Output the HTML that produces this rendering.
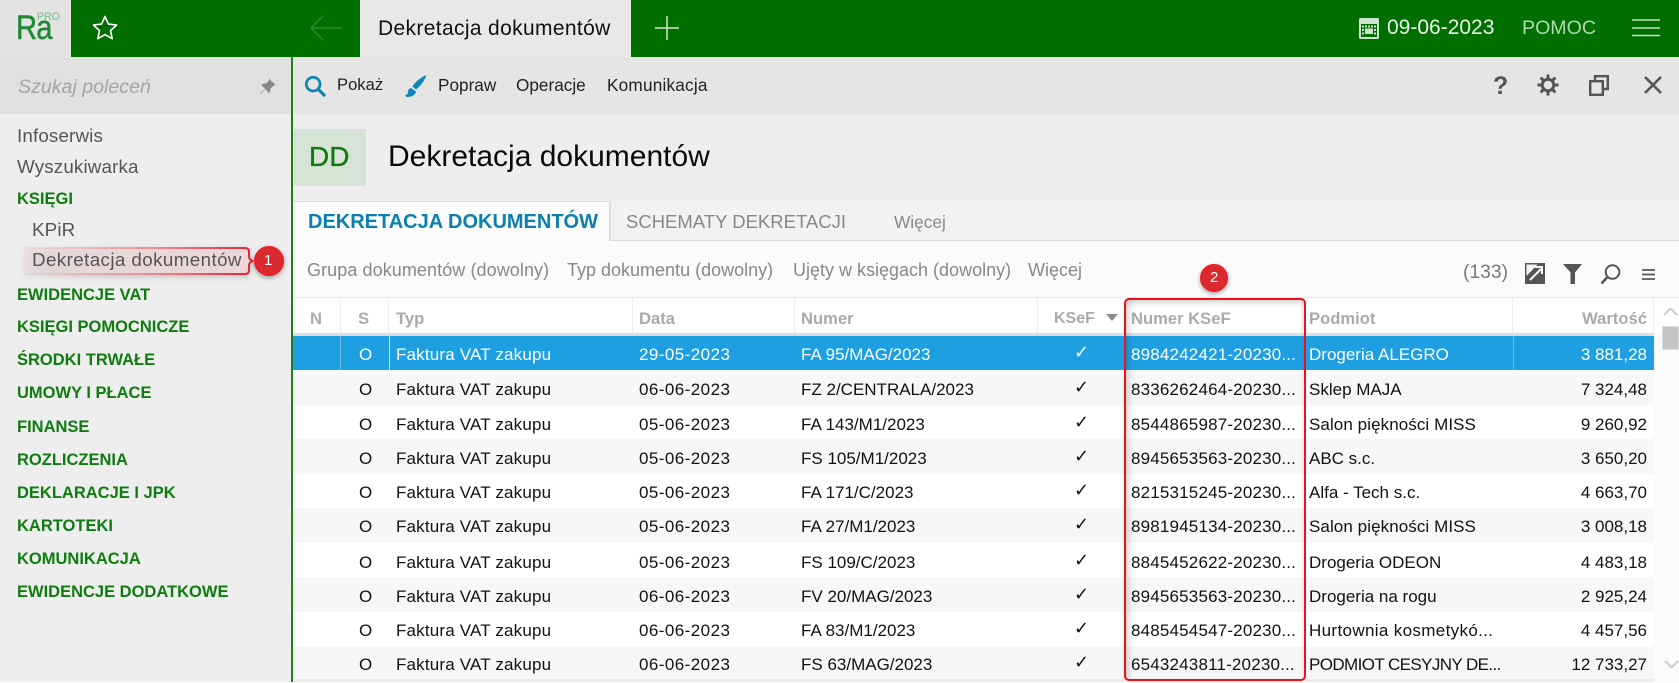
<!DOCTYPE html>
<html><head><meta charset="utf-8"><style>
html,body{margin:0;padding:0}
body{width:1679px;height:682px;position:relative;overflow:hidden;background:#fbfbfb;font-family:"Liberation Sans",sans-serif;color:#111}
.a{position:absolute;white-space:nowrap}
.b{position:absolute}
.s{font-size:18.8px;line-height:24px;color:#555;letter-spacing:.15px}
.g{font-size:16.5px;line-height:24px;color:#0f7c0f;font-weight:bold;left:17px}
.t{font-size:17.2px;line-height:24px;color:#222}
.f{font-size:18px;line-height:24px;color:#888;top:258px}
.h{font-size:16.6px;line-height:24px;color:#aaa;font-weight:bold;top:307px}
.r{position:absolute;left:293px;width:1361px;font-size:17px;color:#111;background:#fff}
.r.e{background:#f7f7f7}
.r.x{background:#1e9fe2;color:#fff}
.r span{position:absolute;white-space:nowrap;top:0}
.c1{left:66px}
.c2{left:103px;letter-spacing:.17px}.c3{left:346px;letter-spacing:.44px}.c4{left:508px}
.c5{left:781px;font-family:"DejaVu Sans",sans-serif;font-size:18px;margin-top:-2px}
.c6{left:838px;letter-spacing:.18px}.c7{left:1016px}.c8{right:7px}
.dot{position:absolute;top:298px;height:35px;width:0;border-left:1px dotted #ddd}
</style></head><body>

<!-- top bar -->
<div class="b" style="left:0;top:0;width:1679px;height:57px;background:#006f00"></div>
<div class="b" style="left:0;top:0;width:71px;height:57px;background:#e3e3e3"></div>
<div class="a" style="left:16px;top:7px;font-size:34px;line-height:42px;color:#1f8a35;letter-spacing:-1px;-webkit-text-stroke:.5px #1f8a35;transform:scaleX(.86);transform-origin:left center">Ra</div>
<div class="a" style="left:37px;top:11px;font-size:10.6px;line-height:13px;color:#8cc59a;-webkit-text-stroke:.3px #8cc59a">PRO</div>
<svg class="b" style="left:90px;top:13px" width="30" height="30" viewBox="0 0 30 30"><path d="M15 3.5l3.4 7.6 8.2.9-6.1 5.6 1.7 8.1L15 21.6 7.8 25.7l1.7-8.1-6.1-5.6 8.2-.9z" fill="none" stroke="#fff" stroke-width="1.6" stroke-linejoin="round"/></svg>
<svg class="b" style="left:308px;top:14px" width="36" height="28" viewBox="0 0 36 28"><path d="M34 14H3M15 2L3 14l12 12" fill="none" stroke="#2d8a2d" stroke-width="1.5"/></svg>
<div class="b" style="left:360px;top:0;width:271px;height:57px;background:#e8e8e8"></div>
<div class="a" style="left:378px;top:16px;font-size:21px;line-height:26px;color:#111;letter-spacing:.35px">Dekretacja dokumentów</div>
<svg class="b" style="left:655px;top:16px" width="24" height="24"><path d="M12 0v24M0 12h24" stroke="#cfe5cf" stroke-width="1.5"/></svg>
<svg class="b" style="left:1359px;top:18px" width="20" height="21" viewBox="0 0 20 21"><rect width="20" height="21" rx="1.5" fill="#cfe3cf"/><rect x="2" y="6" width="16" height="13" fill="#006f00"/><g fill="#cfe3cf"><rect x="3" y="7.5" width="2" height="2"/><rect x="6" y="7.5" width="2" height="2"/><rect x="9" y="7.5" width="2" height="2"/><rect x="12" y="7.5" width="2" height="2"/><rect x="15" y="7.5" width="2" height="2"/><rect x="3" y="11" width="2" height="2"/><rect x="6" y="10.5" width="8" height="5.5"/><rect x="15" y="11" width="2" height="2"/><rect x="3" y="14.5" width="2" height="2"/><rect x="15" y="14.5" width="2" height="2"/></g></svg>
<div class="a" style="left:1387px;top:15px;font-size:21px;line-height:26px;color:#e8f5e8">09-06-2023</div>
<div class="a" style="left:1522px;top:15px;font-size:19.6px;line-height:26px;color:#b3d6b3">POMOC</div>
<svg class="b" style="left:1632px;top:18px" width="28" height="20"><path d="M0 2h28M0 10h28M0 17.5h28" stroke="#c5dfc5" stroke-width="1.5"/></svg>

<!-- sidebar -->
<div class="b" style="left:0;top:57px;width:291px;height:625px;background:#eee"></div>
<div class="b" style="left:0;top:57px;width:291px;height:57px;background:#e0e0e0"></div>
<div class="b" style="left:291px;top:57px;width:2px;height:625px;background:#1f7f1f"></div>
<div class="a" style="left:18px;top:74px;font-size:19.6px;line-height:26px;font-style:italic;color:#a5a5a5">Szukaj poleceń</div>
<svg class="b" style="left:259px;top:78px" width="17" height="17" viewBox="0 0 17 17"><path d="M10 0.5l6.5 6.5-2 .6-3 3-.4 3.4-1.3 1L6.300 11 1.500 16 1 15.500 6 10.700 2.500 7.200l1-1.300 3.400-.4 3-3z" fill="#888"/></svg>
<div class="a s" style="left:17px;top:124px">Infoserwis</div>
<div class="a s" style="left:17px;top:155px">Wyszukiwarka</div>
<div class="a g" style="top:187px">KSIĘGI</div>
<div class="a s" style="left:32px;top:218px">KPiR</div>
<svg class="b" style="left:20px;top:242px;filter:drop-shadow(0 2px 3px rgba(0,0,0,.18))" width="240" height="40" viewBox="0 0 240 40"><defs><linearGradient id="lg" x1="0" x2="1"><stop offset="0" stop-color="#f0a0a0" stop-opacity=".15"/><stop offset=".6" stop-color="#ea7078" stop-opacity=".8"/><stop offset="1" stop-color="#e3202a"/></linearGradient><linearGradient id="lf" x1="0" x2="1"><stop offset="0" stop-color="#e9d8d8" stop-opacity=".35"/><stop offset=".3" stop-color="#e6d8d8"/><stop offset="1" stop-color="#ecd8d8"/></linearGradient></defs><path d="M4 6H225q4 0 4 4v4q0 4 4 5q-4 1-4 5v4q0 4-4 4H4z" fill="url(#lf)"/><path d="M4 6H225q4 0 4 4v4q0 4 4 5q-4 1-4 5v4q0 4-4 4H4" fill="none" stroke="url(#lg)" stroke-width="2"/></svg>
<div class="a s" style="left:32px;top:248px;letter-spacing:.4px">Dekretacja dokumentów</div>
<div class="b" style="left:254px;top:246px;width:26px;height:26px;border-radius:50%;background:#d92b2f;border:2px solid #ee1c25;box-shadow:0 2px 5px rgba(0,0,0,.35)"></div>
<div class="a" style="left:264px;top:249px;font-size:15px;line-height:24px;color:#fff">1</div>
<div class="a g" style="top:283px">EWIDENCJE VAT</div>
<div class="a g" style="top:315px">KSIĘGI POMOCNICZE</div>
<div class="a g" style="top:348px">ŚRODKI TRWAŁE</div>
<div class="a g" style="top:381px">UMOWY I PŁACE</div>
<div class="a g" style="top:415px">FINANSE</div>
<div class="a g" style="top:448px">ROZLICZENIA</div>
<div class="a g" style="top:481px">DEKLARACJE I JPK</div>
<div class="a g" style="top:514px">KARTOTEKI</div>
<div class="a g" style="top:547px">KOMUNIKACJA</div>
<div class="a g" style="top:580px">EWIDENCJE DODATKOWE</div>

<!-- toolbar -->
<div class="b" style="left:293px;top:57px;width:1386px;height:57px;background:#e5e5e5"></div>
<svg class="b" style="left:304px;top:75px" width="22" height="22" viewBox="0 0 24 24"><circle cx="10" cy="10" r="7.500" fill="none" stroke="#0e86b5" stroke-width="3"/><path d="M15.500 15.500L22 22" stroke="#0e86b5" stroke-width="3.500" stroke-linecap="round"/></svg>
<div class="a t" style="left:337px;top:73px;font-size:16.6px">Pokaż</div>
<svg class="b" style="left:404px;top:74px" width="24" height="24" viewBox="0 0 24 24"><path d="M22.500 1C17 3 11 8 8.500 12.500l3.500 3C16.500 12 21 6 22.500 1zM7 14c-3 .5-3 4-3.500 6L1 21.500l2 1.500c5 0 8.500-2 9-5.500z" fill="#0e86b5"/></svg>
<div class="a t" style="left:438px;top:73px">Popraw</div>
<div class="a t" style="left:516px;top:73px">Operacje</div>
<div class="a t" style="left:607px;top:73px;letter-spacing:.2px">Komunikacja</div>
<div class="a" style="left:1493px;top:72px;font-size:25px;line-height:28px;font-weight:bold;color:#555">?</div>
<svg class="b" style="left:1537px;top:74px" width="22" height="22" viewBox="0 0 22 22"><circle cx="11" cy="11" r="5.800" fill="none" stroke="#555" stroke-width="3"/><path d="M11 0.500v4M11 17.500v4M0.500 11h4M17.500 11h4M3.600 3.600l2.800 2.800M15.600 15.600l2.800 2.800M3.600 18.400l2.800-2.800M15.600 6.400l2.800-2.800" stroke="#555" stroke-width="3"/></svg>
<svg class="b" style="left:1589px;top:75px" width="20" height="21" viewBox="0 0 20 21"><path d="M6 6V1.200h12.800V14H14" fill="none" stroke="#555" stroke-width="2.400"/><rect x="1.200" y="6.200" width="12.600" height="13.600" fill="none" stroke="#555" stroke-width="2.400"/></svg>
<svg class="b" style="left:1644px;top:76px" width="18" height="18"><path d="M1 1l16 16M17 1L1 17" stroke="#555" stroke-width="2.600"/></svg>

<!-- header -->
<div class="b" style="left:293px;top:114px;width:1386px;height:87px;background:#eee"></div>
<div class="b" style="left:293px;top:129px;width:73px;height:57px;background:#d8e3d8"></div>
<div class="a" style="left:309px;top:139px;font-size:28px;line-height:36px;color:#0b7a0b;-webkit-text-stroke:.3px #0b7a0b">DD</div>
<div class="a" style="left:388px;top:139px;font-size:30px;line-height:36px;color:#0a0a0a">Dekretacja dokumentów</div>

<!-- tabs -->
<div class="b" style="left:293px;top:201px;width:1386px;height:39px;background:#f2f2f2;border-bottom:1px solid #ddd"></div>
<div class="b" style="left:293px;top:201px;width:318px;height:40px;background:#fcfcfc;border-top:1px solid #ddd;border-right:2px solid #ddd;box-sizing:border-box"></div>
<div class="a" style="left:308px;top:209px;font-size:20px;line-height:26px;font-weight:bold;color:#0a7fb0">DEKRETACJA DOKUMENTÓW</div>
<div class="a" style="left:626px;top:209px;font-size:18.5px;line-height:26px;color:#888">SCHEMATY DEKRETACJI</div>
<div class="a" style="left:894px;top:210px;font-size:17.3px;line-height:24px;color:#888">Więcej</div>

<!-- filters -->
<div class="a f" style="left:307px;letter-spacing:.08px">Grupa dokumentów (dowolny)</div>
<div class="a f" style="left:567px">Typ dokumentu (dowolny)</div>
<div class="a f" style="left:793px">Ujęty w księgach (dowolny)</div>
<div class="a f" style="left:1028px">Więcej</div>
<div class="a" style="left:1463px;top:260px;font-size:19.3px;line-height:26px;color:#777">(133)</div>
<svg class="b" style="left:1525px;top:263px" width="20" height="21" viewBox="0 0 20 21"><rect width="20" height="21" fill="#555"/><path d="M1.500 1.500h11L1.500 13z" fill="#f6f6f6"/><path d="M5 17l11-11M10 4h7v7" fill="none" stroke="#fbfbfb" stroke-width="2"/></svg>
<svg class="b" style="left:1563px;top:264px" width="19" height="20" viewBox="0 0 19 20"><path d="M0 0h19L12 8.500V20H7.500V8.500z" fill="#555"/></svg>
<svg class="b" style="left:1600px;top:264px" width="21" height="21" viewBox="0 0 21 21"><circle cx="12.500" cy="8" r="6.800" fill="none" stroke="#555" stroke-width="2"/><path d="M7.500 13L1.500 19.500" stroke="#555" stroke-width="2.600"/></svg>
<svg class="b" style="left:1642px;top:269px" width="13" height="11"><path d="M0 1h13M0 5.500h13M0 10h13" stroke="#555" stroke-width="1.800"/></svg>

<!-- grid header -->
<div class="b" style="left:293px;top:297px;width:1386px;height:36px;background:#fff;border-top:1px solid #eaeaea;box-sizing:border-box"></div>
<div class="b" style="left:293px;top:333px;width:1361px;height:3px;background:#dedede"></div>
<div class="dot" style="left:340px"></div><div class="dot" style="left:388px"></div><div class="dot" style="left:632px"></div><div class="dot" style="left:794px"></div><div class="dot" style="left:1037px"></div><div class="dot" style="left:1302px"></div><div class="dot" style="left:1512px"></div><div class="dot" style="left:1653px"></div>
<div class="a h" style="left:310px">N</div>
<div class="a h" style="left:358px">S</div>
<div class="a h" style="left:396px">Typ</div>
<div class="a h" style="left:639px">Data</div>
<div class="a h" style="left:801px">Numer</div>
<div class="a h" style="left:1054px;font-size:16px">KSeF</div>
<div class="b" style="left:1106px;top:314px;border-left:6px solid transparent;border-right:6px solid transparent;border-top:7px solid #8a8a8a"></div>
<div class="a h" style="left:1131px">Numer KSeF</div>
<div class="a h" style="left:1309px">Podmiot</div>
<div class="a h" style="right:32px">Wartość</div>

<!-- rows -->
<div class="r x" style="top:336px;height:34px;line-height:38px"><span class="c1">O</span><span class="c2">Faktura VAT zakupu</span><span class="c3">29-05-2023</span><span class="c4">FA 95/MAG/2023</span><span class="c5">✓</span><span class="c6">8984242421-20230...</span><span class="c7">Drogeria ALEGRO</span><span class="c8">3 881,28</span></div>
<div class="b" style="left:340px;top:336px;width:1px;height:34px;background:#6fc0ee"></div>
<div class="b" style="left:389px;top:336px;width:1px;height:34px;background:#e8f5fc"></div>
<div class="b" style="left:1513px;top:336px;width:1px;height:34px;background:#6fc0ee"></div>
<div class="r e" style="top:370px;height:35px;line-height:40px"><span class="c1">O</span><span class="c2">Faktura VAT zakupu</span><span class="c3">06-06-2023</span><span class="c4">FZ 2/CENTRALA/2023</span><span class="c5">✓</span><span class="c6">8336262464-20230...</span><span class="c7">Sklep MAJA</span><span class="c8">7 324,48</span></div>
<div class="r" style="top:405px;height:34px;line-height:40px"><span class="c1">O</span><span class="c2">Faktura VAT zakupu</span><span class="c3">05-06-2023</span><span class="c4">FA 143/M1/2023</span><span class="c5">✓</span><span class="c6">8544865987-20230...</span><span class="c7" style="letter-spacing:.08px">Salon piękności MISS</span><span class="c8">9 260,92</span></div>
<div class="r e" style="top:439px;height:35px;line-height:40px"><span class="c1">O</span><span class="c2">Faktura VAT zakupu</span><span class="c3">05-06-2023</span><span class="c4">FS 105/M1/2023</span><span class="c5">✓</span><span class="c6">8945653563-20230...</span><span class="c7">ABC s.c.</span><span class="c8">3 650,20</span></div>
<div class="r" style="top:474px;height:34px;line-height:38px"><span class="c1">O</span><span class="c2">Faktura VAT zakupu</span><span class="c3">05-06-2023</span><span class="c4">FA 171/C/2023</span><span class="c5">✓</span><span class="c6">8215315245-20230...</span><span class="c7">Alfa - Tech s.c.</span><span class="c8">4 663,70</span></div>
<div class="r e" style="top:508px;height:35px;line-height:38px"><span class="c1">O</span><span class="c2">Faktura VAT zakupu</span><span class="c3">05-06-2023</span><span class="c4">FA 27/M1/2023</span><span class="c5">✓</span><span class="c6">8981945134-20230...</span><span class="c7" style="letter-spacing:.08px">Salon piękności MISS</span><span class="c8">3 008,18</span></div>
<div class="r" style="top:543px;height:34px;line-height:40px"><span class="c1">O</span><span class="c2">Faktura VAT zakupu</span><span class="c3">05-06-2023</span><span class="c4">FS 109/C/2023</span><span class="c5">✓</span><span class="c6">8845452622-20230...</span><span class="c7">Drogeria ODEON</span><span class="c8">4 483,18</span></div>
<div class="r e" style="top:577px;height:35px;line-height:40px"><span class="c1">O</span><span class="c2">Faktura VAT zakupu</span><span class="c3">06-06-2023</span><span class="c4">FV 20/MAG/2023</span><span class="c5">✓</span><span class="c6">8945653563-20230...</span><span class="c7">Drogeria na rogu</span><span class="c8">2 925,24</span></div>
<div class="r" style="top:612px;height:35px;line-height:38px"><span class="c1">O</span><span class="c2">Faktura VAT zakupu</span><span class="c3">06-06-2023</span><span class="c4">FA 83/M1/2023</span><span class="c5">✓</span><span class="c6">8485454547-20230...</span><span class="c7" style="letter-spacing:.35px">Hurtownia kosmetykó...</span><span class="c8">4 457,56</span></div>
<div class="r e" style="top:647px;height:32px;line-height:36px"><span class="c1">O</span><span class="c2">Faktura VAT zakupu</span><span class="c3">06-06-2023</span><span class="c4">FS 63/MAG/2023</span><span class="c5">✓</span><span class="c6">6543243811-20230...</span><span class="c7" style="letter-spacing:-.6px">PODMIOT CESYJNY DE...</span><span class="c8">12 733,27</span></div>
<div class="b" style="left:293px;top:679px;width:1361px;height:3px;background:#ececec"></div>

<!-- scrollbar -->
<svg class="b" style="left:1663px;top:307px" width="15" height="9"><path d="M1 8l6.500-6.500L14 8" fill="none" stroke="#ccc" stroke-width="2"/></svg>
<div class="b" style="left:1662px;top:326px;width:17px;height:24px;background:#c4c4c4;border:1px solid #ddd;box-sizing:border-box"></div>
<svg class="b" style="left:1664px;top:660px" width="15" height="9"><path d="M1 1l6.500 6.500L14 1" fill="none" stroke="#ccc" stroke-width="2"/></svg>

<!-- callout 2 -->
<div class="b" style="left:1124px;top:298px;width:182px;height:383px;box-sizing:border-box;border:2px solid #e8131f;border-radius:5px;box-shadow:inset 6px 6px 8px -5px rgba(0,0,0,.25),inset -3px 0 5px -3px rgba(0,0,0,.15)"></div>
<div class="b" style="left:1200px;top:264px;width:28px;height:28px;box-sizing:border-box;border-radius:50%;background:#d92b2f;border:2px solid #ee1c25;box-shadow:0 2px 5px rgba(0,0,0,.35)"></div>
<div class="a" style="left:1210px;top:266px;font-size:15px;line-height:24px;color:#fff">2</div>
</body></html>
